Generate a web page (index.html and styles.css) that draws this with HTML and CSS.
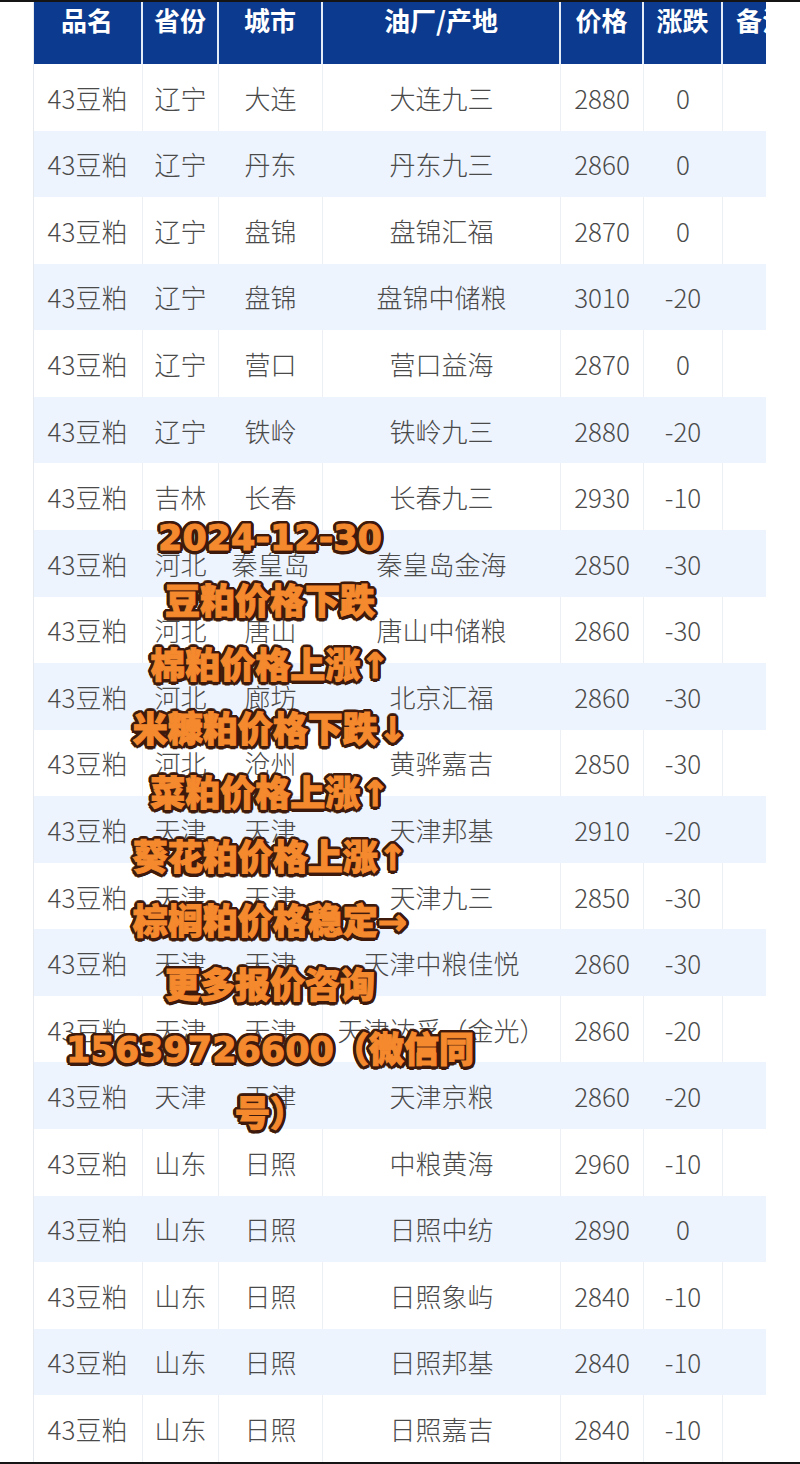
FILE: index.html
```html
<!DOCTYPE html>
<html lang="zh-CN">
<head>
<meta charset="utf-8">
<title>豆粕报价</title>
<link rel="stylesheet" href="styles.css">
</head>
<body>
<div class="page">
  <div class="topbar"></div>
  <div class="wrap">
    <div class="viewport">
      <div class="grid">
        <div class="th">品名</div><div class="th">省份</div><div class="th">城市</div><div class="th">油厂/产地</div><div class="th">价格</div><div class="th">涨跌</div><div class="th">备注</div>

        <div class="td">43豆粕</div><div class="td">辽宁</div><div class="td">大连</div><div class="td">大连九三</div><div class="td">2880</div><div class="td">0</div><div class="td"></div>
        <div class="td alt">43豆粕</div><div class="td alt">辽宁</div><div class="td alt">丹东</div><div class="td alt">丹东九三</div><div class="td alt">2860</div><div class="td alt">0</div><div class="td alt"></div>
        <div class="td">43豆粕</div><div class="td">辽宁</div><div class="td">盘锦</div><div class="td">盘锦汇福</div><div class="td">2870</div><div class="td">0</div><div class="td"></div>
        <div class="td alt">43豆粕</div><div class="td alt">辽宁</div><div class="td alt">盘锦</div><div class="td alt">盘锦中储粮</div><div class="td alt">3010</div><div class="td alt">-20</div><div class="td alt"></div>
        <div class="td">43豆粕</div><div class="td">辽宁</div><div class="td">营口</div><div class="td">营口益海</div><div class="td">2870</div><div class="td">0</div><div class="td"></div>
        <div class="td alt">43豆粕</div><div class="td alt">辽宁</div><div class="td alt">铁岭</div><div class="td alt">铁岭九三</div><div class="td alt">2880</div><div class="td alt">-20</div><div class="td alt"></div>
        <div class="td">43豆粕</div><div class="td">吉林</div><div class="td">长春</div><div class="td">长春九三</div><div class="td">2930</div><div class="td">-10</div><div class="td"></div>
        <div class="td alt">43豆粕</div><div class="td alt">河北</div><div class="td alt">秦皇岛</div><div class="td alt">秦皇岛金海</div><div class="td alt">2850</div><div class="td alt">-30</div><div class="td alt"></div>
        <div class="td">43豆粕</div><div class="td">河北</div><div class="td">唐山</div><div class="td">唐山中储粮</div><div class="td">2860</div><div class="td">-30</div><div class="td"></div>
        <div class="td alt">43豆粕</div><div class="td alt">河北</div><div class="td alt">廊坊</div><div class="td alt">北京汇福</div><div class="td alt">2860</div><div class="td alt">-30</div><div class="td alt"></div>
        <div class="td">43豆粕</div><div class="td">河北</div><div class="td">沧州</div><div class="td">黄骅嘉吉</div><div class="td">2850</div><div class="td">-30</div><div class="td"></div>
        <div class="td alt">43豆粕</div><div class="td alt">天津</div><div class="td alt">天津</div><div class="td alt">天津邦基</div><div class="td alt">2910</div><div class="td alt">-20</div><div class="td alt"></div>
        <div class="td">43豆粕</div><div class="td">天津</div><div class="td">天津</div><div class="td">天津九三</div><div class="td">2850</div><div class="td">-30</div><div class="td"></div>
        <div class="td alt">43豆粕</div><div class="td alt">天津</div><div class="td alt">天津</div><div class="td alt">天津中粮佳悦</div><div class="td alt">2860</div><div class="td alt">-30</div><div class="td alt"></div>
        <div class="td">43豆粕</div><div class="td">天津</div><div class="td">天津</div><div class="td">天津达孚（金光）</div><div class="td">2860</div><div class="td">-20</div><div class="td"></div>
        <div class="td alt">43豆粕</div><div class="td alt">天津</div><div class="td alt">天津</div><div class="td alt">天津京粮</div><div class="td alt">2860</div><div class="td alt">-20</div><div class="td alt"></div>
        <div class="td">43豆粕</div><div class="td">山东</div><div class="td">日照</div><div class="td">中粮黄海</div><div class="td">2960</div><div class="td">-10</div><div class="td"></div>
        <div class="td alt">43豆粕</div><div class="td alt">山东</div><div class="td alt">日照</div><div class="td alt">日照中纺</div><div class="td alt">2890</div><div class="td alt">0</div><div class="td alt"></div>
        <div class="td">43豆粕</div><div class="td">山东</div><div class="td">日照</div><div class="td">日照象屿</div><div class="td">2840</div><div class="td">-10</div><div class="td"></div>
        <div class="td alt">43豆粕</div><div class="td alt">山东</div><div class="td alt">日照</div><div class="td alt">日照邦基</div><div class="td alt">2840</div><div class="td alt">-10</div><div class="td alt"></div>
        <div class="td">43豆粕</div><div class="td">山东</div><div class="td">日照</div><div class="td">日照嘉吉</div><div class="td">2840</div><div class="td">-10</div><div class="td"></div>
      </div>
    </div>
  </div>
  <div class="bottombar"></div>

  <div class="overlay">
    <div class="line">2024-12-30</div>
    <div class="line">豆粕价格下跌</div>
    <div class="line">棉粕价格上涨↑</div>
    <div class="line">米糠粕价格下跌↓</div>
    <div class="line">菜粕价格上涨↑</div>
    <div class="line">葵花粕价格上涨↑</div>
    <div class="line">棕榈粕价格稳定→</div>
    <div class="line">更多报价咨询</div>
    <div class="line">15639726600（微信同号）</div>
  </div>
</div>
</body>
</html>
```
FILE: styles.css
```css
html, body {
  margin: 0;
  padding: 0;
  background: #ffffff;
}

.page {
  position: relative;
  width: 800px;
  height: 1464px;
  overflow: hidden;
  display: flex;
  flex-direction: column;
  font-family: "Noto Sans CJK SC", "Noto Sans", sans-serif;
}

.topbar {
  height: 2px;
  background: #151515;
  flex: none;
}

.wrap {
  flex: 1;
  padding-left: 33px;
  overflow: hidden;
}

.viewport {
  width: 733px;
  height: 100%;
  overflow: hidden;
  border-left: 1px solid #e6e9ee;
  box-sizing: border-box;
}

.grid {
  display: grid;
  width: 770px;
  margin-left: -1px;
  grid-template-columns: 110px 76px 104px 238px 83px 79px 80px;
  grid-template-rows: 62px;
  grid-auto-rows: 66.57px;
}

.th {
  background: #0b3a8e;
  color: #ffffff;
  font-weight: 700;
  font-size: 26px;
  line-height: 28px;
  padding-top: 4px;
  text-align: center;
  border-right: 2px solid #e4ecf7;
  box-sizing: border-box;
  white-space: nowrap;
  overflow: hidden;
}

.th:last-child {
  border-right: none;
}

.td {
  display: flex;
  align-items: center;
  justify-content: center;
  font-size: 26px;
  font-weight: 300;
  color: #4a4a4a;
  background: #ffffff;
  border-right: 1px solid #eceff3;
  box-sizing: border-box;
  white-space: nowrap;
}

.td.alt {
  background: #eef4fd;
  border-right-color: #eef4fd;
}

.bottombar {
  height: 2px;
  background: #151515;
  flex: none;
}

.overlay {
  position: absolute;
  left: 55px;
  top: 506px;
  width: 430px;
  text-align: center;
  font-family: "DejaVu Sans", "Noto Sans CJK SC", sans-serif;
  font-weight: 900;
  font-size: 35px;
  line-height: 64px;
  color: #f5892e;
  -webkit-text-stroke: 1px #f5892e;
  text-shadow:
    3.5px 0 0 #3d1a0b, -3.5px 0 0 #3d1a0b, 0 3.5px 0 #3d1a0b, 0 -3.5px 0 #3d1a0b,
    2.5px 2.5px 0 #3d1a0b, -2.5px 2.5px 0 #3d1a0b, 2.5px -2.5px 0 #3d1a0b, -2.5px -2.5px 0 #3d1a0b,
    3.2px 1.4px 0 #3d1a0b, -3.2px 1.4px 0 #3d1a0b, 3.2px -1.4px 0 #3d1a0b, -3.2px -1.4px 0 #3d1a0b,
    1.4px 3.2px 0 #3d1a0b, -1.4px 3.2px 0 #3d1a0b, 1.4px -3.2px 0 #3d1a0b, -1.4px -3.2px 0 #3d1a0b;
}
```
